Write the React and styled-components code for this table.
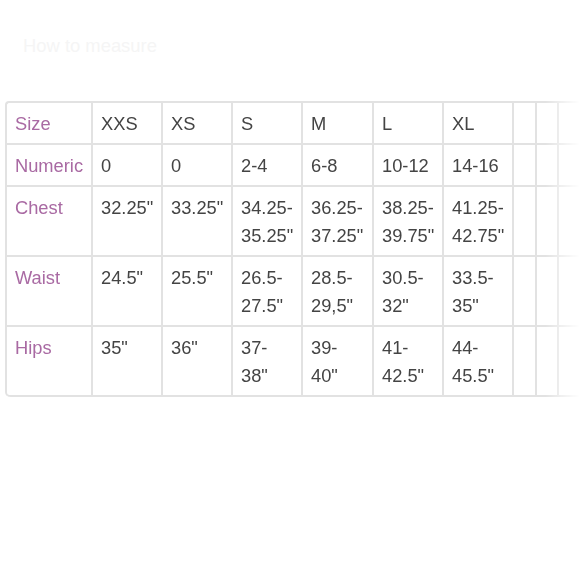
import React from "react";
import styled, { createGlobalStyle } from "styled-components";

const Global = createGlobalStyle`
  html, body { margin: 0; padding: 0; background: #fff; }
  body { font-family: "Liberation Sans", Arial, sans-serif; }
`;

const Page = styled.div`
  width: 580px;
  height: 580px;
  overflow: hidden;
  padding-top: 35px;
  box-sizing: border-box;
`;

const Heading = styled.div`
  margin-left: 23px;
  font-size: 18.4px;
  line-height: 21px;
  color: #f5f5f5;
`;

const Frame = styled.div`
  margin-top: 45px;
  padding-left: 5px;
  width: 580px;
  box-sizing: border-box;
  -webkit-mask-image: linear-gradient(to right, #000 94%, transparent 100%);
  mask-image: linear-gradient(to right, #000 94%, transparent 100%);
`;

const Table = styled.table`
  border-collapse: separate;
  border-spacing: 0;
  table-layout: fixed;
  width: 596px;
  border-top: 2px solid #e2e2e2;
  border-left: 2px solid #e2e2e2;
  border-radius: 4px 0 0 5px;
`;

const Col = styled.col`
  width: ${(p) => p.$w}px;
`;

const Cell = styled.td`
  box-sizing: border-box;
  vertical-align: top;
  padding: 7px 4px 5px 8px;
  line-height: 28px;
  font-size: 18.3px;
  color: ${(p) => (p.$label ? "#a96aa3" : "#444")};
  border-right: 2px solid #e2e2e2;
  border-bottom: 2px solid #e2e2e2;
  height: ${(p) => p.$h}px;
  white-space: nowrap;
  ${(p) => (p.$corner ? "border-bottom-left-radius: 4px;" : "")}
`;

const widths = [86, 70, 70, 70, 71, 70, 70, 23, 22, 44];

const rows = [
  { label: "Size", values: ["XXS", "XS", "S", "M", "L", "XL"], h: 42 },
  { label: "Numeric", values: ["0", "0", "2-4", "6-8", "10-12", "14-16"], h: 42 },
  {
    label: "Chest",
    values: ['32.25"', '33.25"', '34.25-\n35.25"', '36.25-\n37.25"', '38.25-\n39.75"', '41.25-\n42.75"'],
    h: 70,
  },
  {
    label: "Waist",
    values: ['24.5"', '25.5"', '26.5-\n27.5"', '28.5-\n29,5"', '30.5-\n32"', '33.5-\n35"'],
    h: 70,
  },
  {
    label: "Hips",
    values: ['35"', '36"', '37-\n38"', '39-\n40"', '41-\n42.5"', '44-\n45.5"'],
    h: 69,
  },
];

function Lines({ text }) {
  const parts = text.split("\n");
  return parts.map((p, i) => (
    <React.Fragment key={i}>
      {p}
      {i < parts.length - 1 && <br />}
    </React.Fragment>
  ));
}

export default function App() {
  return (
    <Page>
      <Global />
      <Heading>How to measure</Heading>
      <Frame>
        <Table>
          <colgroup>
            {widths.map((w, i) => (
              <Col key={i} $w={w} />
            ))}
          </colgroup>
          <tbody>
            {rows.map((r, ri) => (
              <tr key={r.label}>
                <Cell $label $h={r.h} $corner={ri === rows.length - 1}>
                  {r.label}
                </Cell>
                {r.values.map((v, i) => (
                  <Cell key={i} $h={r.h}>
                    <Lines text={v} />
                  </Cell>
                ))}
                <Cell $h={r.h} />
                <Cell $h={r.h} />
                <Cell $h={r.h} />
              </tr>
            ))}
          </tbody>
        </Table>
      </Frame>
    </Page>
  );
}
